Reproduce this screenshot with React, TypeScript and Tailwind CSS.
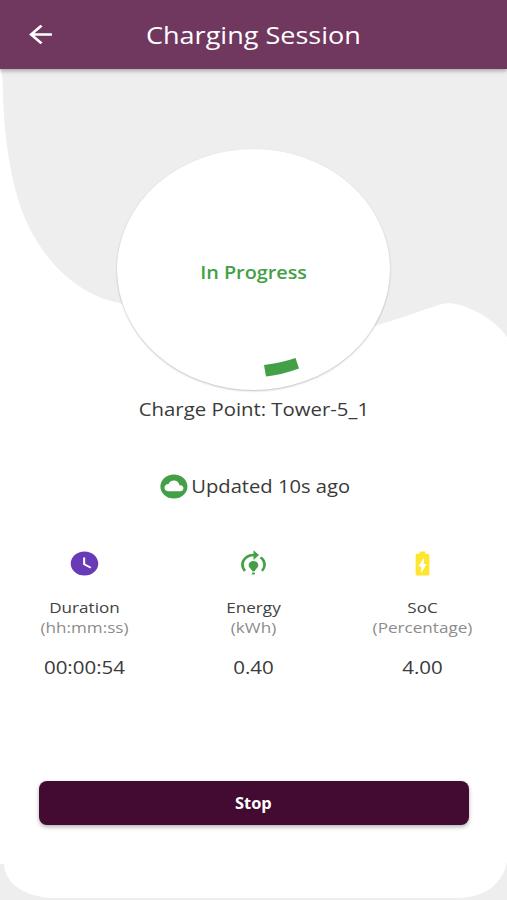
import type { ReactNode } from "react";
import {
  MdArrowBack,
  MdBatteryChargingFull,
  MdCloudCircle,
  MdModelTraining,
  MdWatchLater,
} from "react-icons/md";

type StatProps = {
  icon: ReactNode;
  label: string;
  unit: string;
  value: string;
};

const Stat = ({ icon, label, unit, value }: StatProps) => {
  return (
    <div className="flex flex-col items-center scale-x-[1.14]">
      {icon}
      <p className="mt-[19px] text-[15px] leading-5 text-[#424242]">{label}</p>
      <p className="text-[15px] leading-5 text-[#8c8c8c]">{unit}</p>
      <p className="mt-[18px] text-[18px] leading-6 text-[#3a3a3a]">{value}</p>
    </div>
  );
};

// White sheet with the wave cut out of its top edge
const Backdrop = () => (
  <svg className="absolute inset-0 h-full w-full" viewBox="0 0 507 900">
    <path
      d="M0 69 C2 72 3 78 3 95 C5 150 13 185 22 211 C40 259 78 296 120 303 C210 355 300 345 378 325 C405 317 420 311 440 304.500 C446 302.500 452 303 460 305 C480 311 496 322 507 337 V862 C502 884 486 898 456 898 H50 C25 896 5 884 4 864 H0 Z"
      fill="#fff"
    />
  </svg>
);

const StatusDial = () => (
  <div className="relative flex h-[241px] w-[273px] items-center justify-center rounded-[50%] bg-white shadow-[0_1px_2px_rgba(0,0,0,0.25)]">
    <svg className="absolute inset-0 h-full w-full" viewBox="0 0 273 241">
      <path d="M147 216 Q164 214 178.500 209 L182 219.500 Q166 225.500 149 227.500 Z" fill="#43a047" />
    </svg>
    <p className="mt-[4px] scale-x-[1.1] text-[18px] leading-6 font-semibold text-[#43a047]">In Progress</p>
  </div>
);

export const ChargingSession = () => {
  return (
    <div className="relative flex h-[900px] w-[507px] flex-col overflow-hidden bg-[#eeeeee] font-['Open_Sans',sans-serif]">
      <Backdrop />
      <header className="relative flex h-[69px] shrink-0 items-center justify-center bg-[#71385f] text-white shadow-[0_2px_4px_rgba(0,0,0,0.3)]">
        <button type="button" className="absolute left-[26px] top-[20px] scale-x-[1.18]" aria-label="Back">
          <MdArrowBack className="size-[29px]" />
        </button>
        <h1 className="scale-x-[1.175] text-[23px] leading-8">Charging Session</h1>
      </header>

      <main className="relative flex flex-1 flex-col items-center pt-[80px]">
        <StatusDial />
        <p className="mt-[7px] scale-x-[1.13] text-[18px] leading-6 text-[#3a3a3a]">Charge Point: Tower-5_1</p>

        <div className="mt-[51px] flex scale-x-[1.12] items-center">
          <MdCloudCircle className="size-[29px] text-[#43a047]" />
          <p className="-mt-px ml-px text-[18px] leading-6 text-[#3a3a3a]">Updated 10s ago</p>
        </div>

        <div className="mt-[48px] grid w-full grid-cols-3">
          <Stat
            icon={<MdWatchLater className="size-[29px] text-[#673ab7]" />}
            label="Duration"
            unit="(hh:mm:ss)"
            value="00:00:54"
          />
          <Stat
            icon={<MdModelTraining className="size-[29px] text-[#43a047]" />}
            label="Energy"
            unit="(kWh)"
            value="0.40"
          />
          <Stat
            icon={<MdBatteryChargingFull className="size-[29px] text-[#ffe62e]" />}
            label="SoC"
            unit="(Percentage)"
            value="4.00"
          />
        </div>

        <button
          type="button"
          className="mt-[102px] flex h-[44px] w-[430px] items-center justify-center rounded-[8px] bg-[#430b31] text-white shadow-[0_2px_4px_rgba(0,0,0,0.3)]"
        >
          <span className="mt-[2px] scale-x-[1.06] text-[15.5px] font-bold">Stop</span>
        </button>
      </main>
    </div>
  );
};

export default ChargingSession;
